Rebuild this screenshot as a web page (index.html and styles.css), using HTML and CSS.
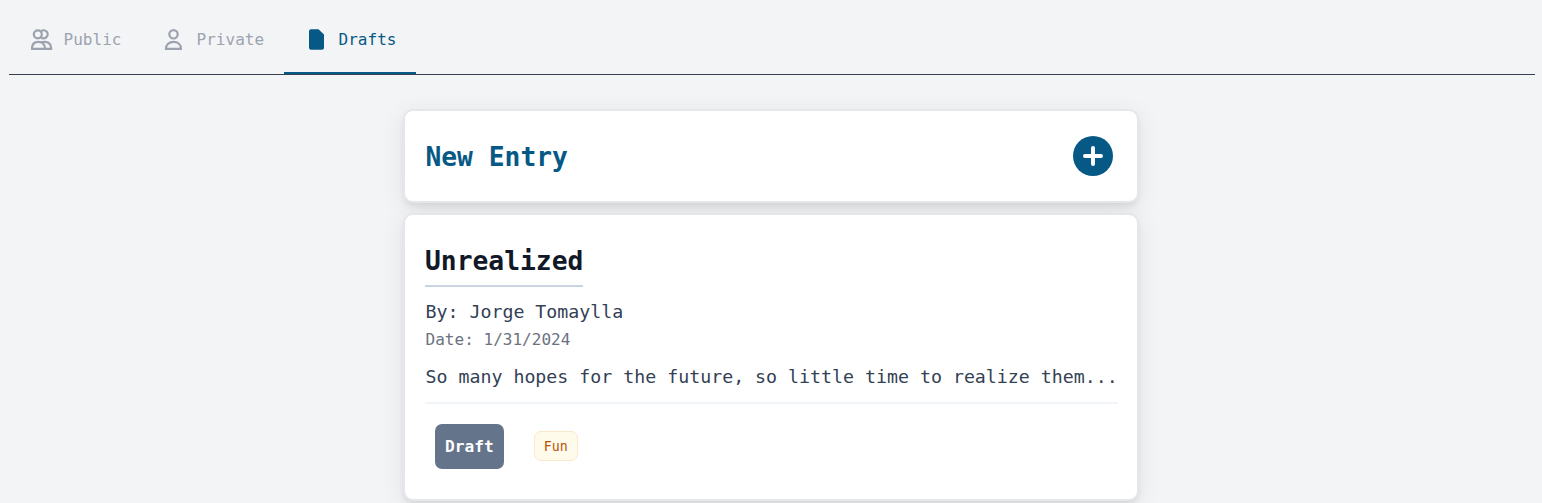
FILE: index.html
```html
<!DOCTYPE html>
<html lang="en">
<head>
<meta charset="utf-8">
<title>Entries</title>
<link rel="stylesheet" href="styles.css">
</head>
<body>
<nav class="tabs">
  <a class="tab tab-public">
    <svg class="icon" width="22" height="22" viewBox="0 0 22 22"><g fill="none" stroke="currentColor" stroke-width="2.2"><circle cx="6.800" cy="5.300" r="4"/><path d="M10 2.300a4 4 0 1 1 0 6M1 19.800c0-4.500 2.500-7 6.300-7s6.700 2.500 6.700 7zM10 13.500c1-.5 2-.7 3.500-.7 4 0 6.700 2.500 6.700 7h-7"/></g></svg>
    <span>Public</span>
  </a>
  <a class="tab tab-private">
    <svg class="icon" width="18" height="22" viewBox="0 0 18 22"><g fill="none" stroke="currentColor" stroke-width="2.200"><circle cx="9.500" cy="5.300" r="4.200"/><path d="M2 19.800c0-4.200 3-7 7.500-7s7.400 2.800 7.400 7z"/></g></svg>
    <span>Private</span>
  </a>
  <a class="tab tab-drafts active">
    <svg class="icon" width="16" height="22" viewBox="0 0 16 22"><path fill="currentColor" d="M3 .300h7.500l5.500 5.200v13.200a2 2 0 0 1-2 2H3a2 2 0 0 1-2-2V2.300a2 2 0 0 1 2-2z"/></svg>
    <span>Drafts</span>
  </a>
</nav>
<main class="feed">
  <section class="card new-entry">
    <h2 class="new-title">New Entry</h2>
    <button class="add" aria-label="Add entry"><svg width="40" height="40" viewBox="0 0 40 40"><path d="M20 12v16M12 20h16" stroke="#fff" stroke-width="4" stroke-linecap="round"/></svg></button>
  </section>
  <article class="card entry">
    <h2 class="entry-title">Unrealized</h2>
    <p class="author">By: Jorge Tomaylla</p>
    <p class="date">Date: 1/31/2024</p>
    <p class="excerpt">So many hopes for the future, so little time to realize them...</p>
    <div class="labels">
      <span class="status">Draft</span>
      <span class="tag">Fun</span>
    </div>
  </article>
</main>
</body>
</html>
```
FILE: styles.css
```css
* { box-sizing: border-box; }
html { overflow: hidden; background: #f3f4f6; }
body {
  margin: 0;
  padding: 0 7px 0 9px;
  font-family: Consolas, "DejaVu Sans Mono", monospace;
  color: #334155;
}
h2, p { margin: 0; font-weight: 400; }
.tabs {
  display: flex;
  height: 75px;
  border-bottom: 1px solid #374151;
}
.tab {
  display: flex;
  align-items: center;
  height: 74px;
  padding: 8px 20px 0 22px;
  border-bottom: 2px solid transparent;
  color: #9ca3af;
  font-size: 16px;
  line-height: 22px;
}
.tab span { margin-top: -1px; padding-left: 0.5px; letter-spacing: 0.04px; }
.tab-public { width: 133px; gap: 10px; }
.tab-private { width: 142px; gap: 14px; }
.tab-drafts { width: 132px; gap: 14px; padding-left: 24px; }
.tab.active { color: #075985; border-color: #075985; }
.icon { flex: none; }
.feed {
  display: flex;
  flex-direction: column;
  align-items: center;
  gap: 10px;
  padding: 34px 1px 20px 0;
}
.card {
  width: 736px;
  margin-right: 1px;
  border: 2px solid #e5e7eb;
  border-radius: 10px;
  background: #fff;
  box-shadow: 0 5px 24px rgba(0, 0, 0, 0.08), 0 4px 6px -1px rgba(0, 0, 0, 0.08);
}
.new-entry {
  display: flex;
  align-items: center;
  justify-content: space-between;
  height: 94px;
  padding: 0 24px 0 20px;
}
.new-title, .entry-title {
  font-size: 26.3px;
  font-weight: 700;
  line-height: 42px;
}
.new-title { padding: 2px 0 0 0.4px; color: #075985; }
.add {
  width: 40px;
  height: 40px;
  padding: 0;
  border: 0;
  border-radius: 50%;
  background: #075985;
}
.add svg { display: block; }
.entry { height: 288px; padding: 24px 19px 0 20px; }
.entry-title {
  width: 158px;
  height: 48px;
  border-bottom: 2px solid #cbd5e1;
  color: #111827;
  line-height: 44px;
}
.author, .date, .excerpt { text-indent: 0.5px; }
.author { margin-top: 11px; font-size: 18.25px; line-height: 28px; }
.date { color: #6b7280; font-size: 16.06px; line-height: 27px; }
.excerpt {
  height: 51px;
  padding-top: 11px;
  border-bottom: 2px solid #f1f5f9;
  font-size: 18.25px;
  line-height: 26px;
  white-space: nowrap;
}
.labels {
  display: flex;
  align-items: center;
  gap: 30px;
  padding: 20px 10px;
}
.status {
  padding: 0 10px;
  border-radius: 7px;
  background: #64748b;
  color: #fff;
  font-size: 16.2px;
  font-weight: 700;
  line-height: 45px;
}
.tag {
  height: 30px;
  margin-bottom: 1px;
  padding: 0 9px;
  border: 1px solid #fae8cd;
  border-radius: 7px;
  background: #fffbeb;
  color: #b45309;
  font-size: 13.3px;
  line-height: 30px;
}
```
